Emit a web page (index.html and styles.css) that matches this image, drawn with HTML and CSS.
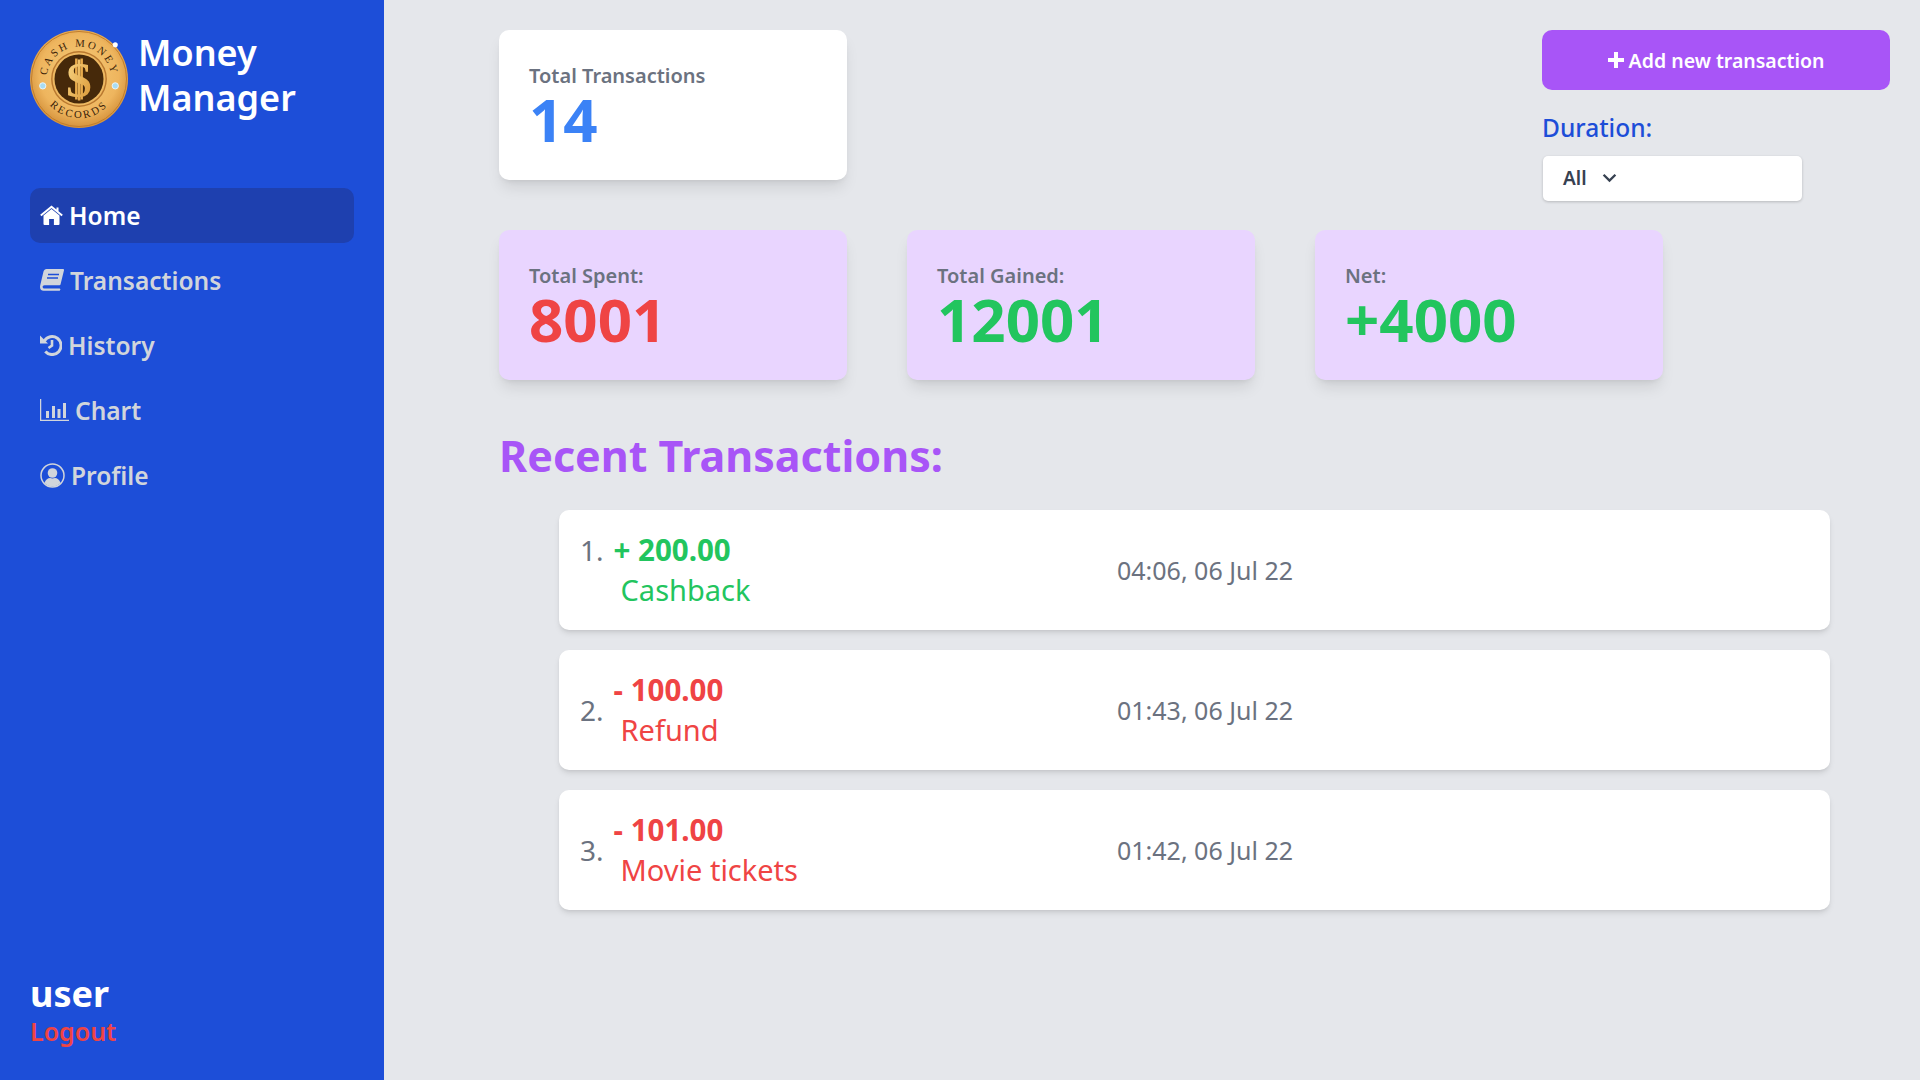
FILE: index.html
```html
<!DOCTYPE html>
<html lang="en">
<head>
	<meta charset="UTF-8">
	<title>Money Manager</title>
	<link rel="stylesheet" href="styles.css">
</head>
<body>
	<aside class="sidebar">
		<div class="brand">
			<svg class="logo" viewBox="0 0 100 100">
				<defs>
					<radialGradient id="gold" cx="50%" cy="45%" r="58%">
						<stop offset="0" stop-color="#f6cc7a"/>
						<stop offset=".7" stop-color="#eeb55e"/>
						<stop offset="1" stop-color="#cf8a34"/>
					</radialGradient>
					<linearGradient id="dollar" x1="0" y1="0" x2="1" y2="1">
						<stop offset="0" stop-color="#fbdc8c"/>
						<stop offset="1" stop-color="#d8922f"/>
					</linearGradient>
					<path id="arcTop" d="M20.100 64A33 33 0 1 1 79.900 64"/>
					<path id="arcBottom" d="M10 50A40 40 0 0 0 90 50"/>
				</defs>
				<circle cx="50" cy="50" r="50" fill="url(#gold)"/>
				<circle cx="50" cy="50" r="48.500" fill="none" stroke="#c07c2c" stroke-width="1"/>
				<circle cx="50" cy="50" r="28.500" fill="#b9782f"/>
				<circle cx="50" cy="50" r="27" fill="#eeb962"/>
				<circle cx="50" cy="50" r="25" fill="#46290a"/>
				<text class="logo-ring"><textPath href="#arcTop" startOffset="50%" text-anchor="middle">CASH MONEY</textPath></text>
				<text class="logo-ring"><textPath href="#arcBottom" startOffset="50%" text-anchor="middle">RECORDS</textPath></text>
				<path d="M46 29h2.500v42H46zM51.500 29H54v42h-2.500z" fill="#e8ab4c"/>
				<text class="logo-dollar" x="50" y="68" text-anchor="middle">$</text>
				<circle cx="13" cy="57" r="3.200" fill="#a9dcf2" stroke="#e8f6fb"/>
				<circle cx="87" cy="57" r="3.200" fill="#a9dcf2" stroke="#e8f6fb"/>
				<circle cx="87" cy="15" r="2.600" fill="#fff"/>
			</svg>
			<h1 class="brand-name">Money Manager</h1>
		</div>
		<nav class="menu">
			<a class="menu-item active">
				<svg class="icon" width="23" height="20" viewBox="0 0 23 20"><path d="M11.5 4 3.5 10.6V19a1 1 0 0 0 1 1h4.6v-6h4.8v6h4.600a1 1 0 0 0 1-1v-8.400z" fill="currentColor"/><path d="M.8 10.500 11.500 1.700 22.200 10.500M17.500 2.500v4" fill="none" stroke="currentColor" stroke-width="2"/></svg>
				Home
			</a>
			<a class="menu-item">
				<svg class="icon" width="24" height="22" viewBox="0 0 24 22"><path d="M6.500 0H23a1 1 0 0 1 1 1.200L20.500 15.500a1 1 0 0 1-1 .8H4.500c-2.500 0-2.500 3.200 0 3.200h15.200l.8.800-.8 1.500H4C.5 22-.5 19 .3 16L3.500 2.500C4 1 5 0 6.500 0z" fill="currentColor"/><path d="M8 5.500h11M7 9h11" stroke="#1d4ed8" stroke-width="1.300"/></svg>
				Transactions
			</a>
			<a class="menu-item">
				<svg class="icon" width="22" height="22" viewBox="0 0 22 22"><path d="M4.300 7a9 9 0 1 1 1 10.500" fill="none" stroke="currentColor" stroke-width="3"/><path d="M0 1.500 8 9.500H0z" fill="currentColor"/><path d="M12 6v5.500l-3.500 2.500" fill="none" stroke="currentColor" stroke-width="2.600"/></svg>
				History
			</a>
			<a class="menu-item">
				<svg class="icon" width="29" height="22" viewBox="0 0 29 22"><path d="M.6 0v21.400H29" fill="none" stroke="currentColor" stroke-width="1.300"/><path d="M6 12h3v7H6zM12 7h3v12h-3zM17.500 10h3v9h-3zM23 4h3v15h-3z" fill="currentColor"/></svg>
				Chart
			</a>
			<a class="menu-item">
				<svg class="icon" width="25" height="25" viewBox="0 0 25 25"><circle cx="12.500" cy="12.500" r="11.500" fill="none" stroke="currentColor" stroke-width="1.500"/><circle cx="12.500" cy="10" r="4.800" fill="currentColor"/><path d="M4.500 20c1-3.500 3.500-5 5.500-5 1.600.6 3.400.6 5 0 2 0 4.500 1.500 5.500 5a11 11 0 0 1-16 0z" fill="currentColor"/></svg>
				Profile
			</a>
		</nav>
		<div class="account">
			<div class="account-name">user</div>
			<a class="logout">Logout</a>
		</div>
	</aside>

	<main class="content">
		<div class="top-row">
			<div class="stat-card">
				<div class="stat-label">Total Transactions</div>
				<div class="stat-value blue">14</div>
			</div>
			<div class="actions">
				<button class="add-btn"><svg width="16" height="16" viewBox="0 0 16 16"><path d="M6 0h4v6h6v4h-6v6H6v-6H0V6h6z" fill="currentColor"/></svg> Add new transaction</button>
				<label class="duration-label">Duration:</label>
				<div class="duration-select">All <svg width="15" height="10" viewBox="0 0 14 9"><path d="M1.500 1.500 7 7l5.500-5.500" fill="none" stroke="currentColor" stroke-width="2.200"/></svg></div>
			</div>
		</div>

		<div class="stats">
			<div class="stat-card purple">
				<div class="stat-label">Total Spent:</div>
				<div class="stat-value red">8001</div>
			</div>
			<div class="stat-card purple">
				<div class="stat-label">Total Gained:</div>
				<div class="stat-value green">12001</div>
			</div>
			<div class="stat-card purple">
				<div class="stat-label">Net:</div>
				<div class="stat-value green">+4000</div>
			</div>
		</div>

		<h2 class="recent-title">Recent Transactions:</h2>

		<ul class="tx-list">
			<li class="tx green">
				<div class="tx-main">
					<span class="tx-num first">1.</span>
					<div>
						<div class="tx-amount">+ 200.00</div>
						<div class="tx-name">Cashback</div>
					</div>
				</div>
				<div class="tx-date">04:06, 06 Jul 22</div>
			</li>
			<li class="tx red">
				<div class="tx-main">
					<span class="tx-num">2.</span>
					<div>
						<div class="tx-amount">- 100.00</div>
						<div class="tx-name">Refund</div>
					</div>
				</div>
				<div class="tx-date">01:43, 06 Jul 22</div>
			</li>
			<li class="tx red">
				<div class="tx-main">
					<span class="tx-num">3.</span>
					<div>
						<div class="tx-amount">- 101.00</div>
						<div class="tx-name">Movie tickets</div>
					</div>
				</div>
				<div class="tx-date">01:42, 06 Jul 22</div>
			</li>
		</ul>
	</main>
</body>
</html>
```

FILE: styles.css
```css
*{margin: 0;padding: 0;box-sizing: border-box;list-style: none;}
body{display: flex;height: 100vh;overflow: hidden;background: #e5e7eb;font-family: "Noto Sans","Open Sans",sans-serif;color: #6b7280;}

.sidebar{width: 384px;flex: none;padding: 30px;background: #1d4ed8;display: flex;flex-direction: column;}
.brand{display: flex;gap: 10px;height: 98px;}
.logo{width: 98px;height: 98px;flex: none;}
.logo-ring{font-family: "Liberation Serif",serif;font-size: 11px;letter-spacing: 2.4px;fill: #3a2208;}
.logo-dollar{font-family: "Liberation Serif",serif;font-size: 52px;font-weight: 700;fill: url(#dollar);}
.brand-name{width: 200px;font-size: 36px;line-height: 45px;font-weight: 600;color: #fff;}
.menu{margin-top: 60px;display: flex;flex-direction: column;gap: 10px;}
.menu-item{height: 55px;padding: 0 10px 1px;border-radius: 10px;display: flex;align-items: center;gap: 6px;font-size: 24.5px;font-weight: 600;color: #d1d5db;}
.menu-item.active{background: #1e40af;color: #fff;}
.icon{flex: none;}
.account{margin: auto 0 3px;}
.account-name{font-size: 36px;line-height: 43px;font-weight: 700;color: #fff;}
.logout{display: block;font-size: 25px;line-height: 32px;font-weight: 600;color: #ef4444;}

.content{flex: 1;padding: 30px 30px 0 115px;}
.top-row{display: flex;justify-content: space-between;height: 200px;}
.stats{display: flex;gap: 60px;}
.stat-card{width: 348px;height: 150px;padding: 32px 30px 0;background: #fff;border-radius: 10px;box-shadow: 0 10px 15px -3px rgba(0,0,0,.1),0 4px 6px -4px rgba(0,0,0,.1);}
.stat-card.purple{background: #e9d5ff;}
.stat-label{font-size: 20px;line-height: 28px;font-weight: 600;color: #6b7280;}
.stat-value{font-size: 60px;line-height: 58px;font-weight: 700;}
.blue{color: #3b82f6;}
.red{color: #ef4444;}
.green{color: #22c55e;}

.actions{width: 348px;}
.add-btn{width: 100%;height: 60px;border: 0;border-radius: 10px;background: #a855f7;color: #fff;font: 600 19.5px "Noto Sans","Open Sans",sans-serif;}
.duration-label{display: block;margin-top: 21px;font-size: 24.5px;line-height: 34px;font-weight: 500;color: #1d4ed8;}
.duration-select{width: 259px;height: 45px;margin: 11px 0 0 1px;padding: 0 20px 2px;background: #fff;border-radius: 5px;box-shadow: 0 1px 3px rgba(0,0,0,.2);display: flex;align-items: center;gap: 15px;font-size: 19px;font-weight: 600;color: #374151;}

.recent-title{margin-top: 48px;font-size: 43px;line-height: 56px;font-weight: 700;color: #a855f7;}
.tx-list{margin: 26px 0 0 60px;width: 1271px;display: flex;flex-direction: column;gap: 20px;}
.tx{height: 120px;padding: 0 21px;background: #fff;border-radius: 10px;box-shadow: 0 4px 6px -1px rgba(0,0,0,.1),0 2px 4px -2px rgba(0,0,0,.1);display: flex;align-items: center;}
.tx-main{width: 537px;display: flex;align-items: center;gap: 10px;}
.tx-num{font-size: 28px;color: #6b7280;}
.tx-num.first{align-self: flex-start;margin-top: 1px;}
.tx-amount{font-size: 29.5px;line-height: 40px;font-weight: 700;}
.tx-name{padding-left: 7px;font-size: 29px;line-height: 40px;}
.tx-date{font-size: 25px;color: #6b7280;}
```
